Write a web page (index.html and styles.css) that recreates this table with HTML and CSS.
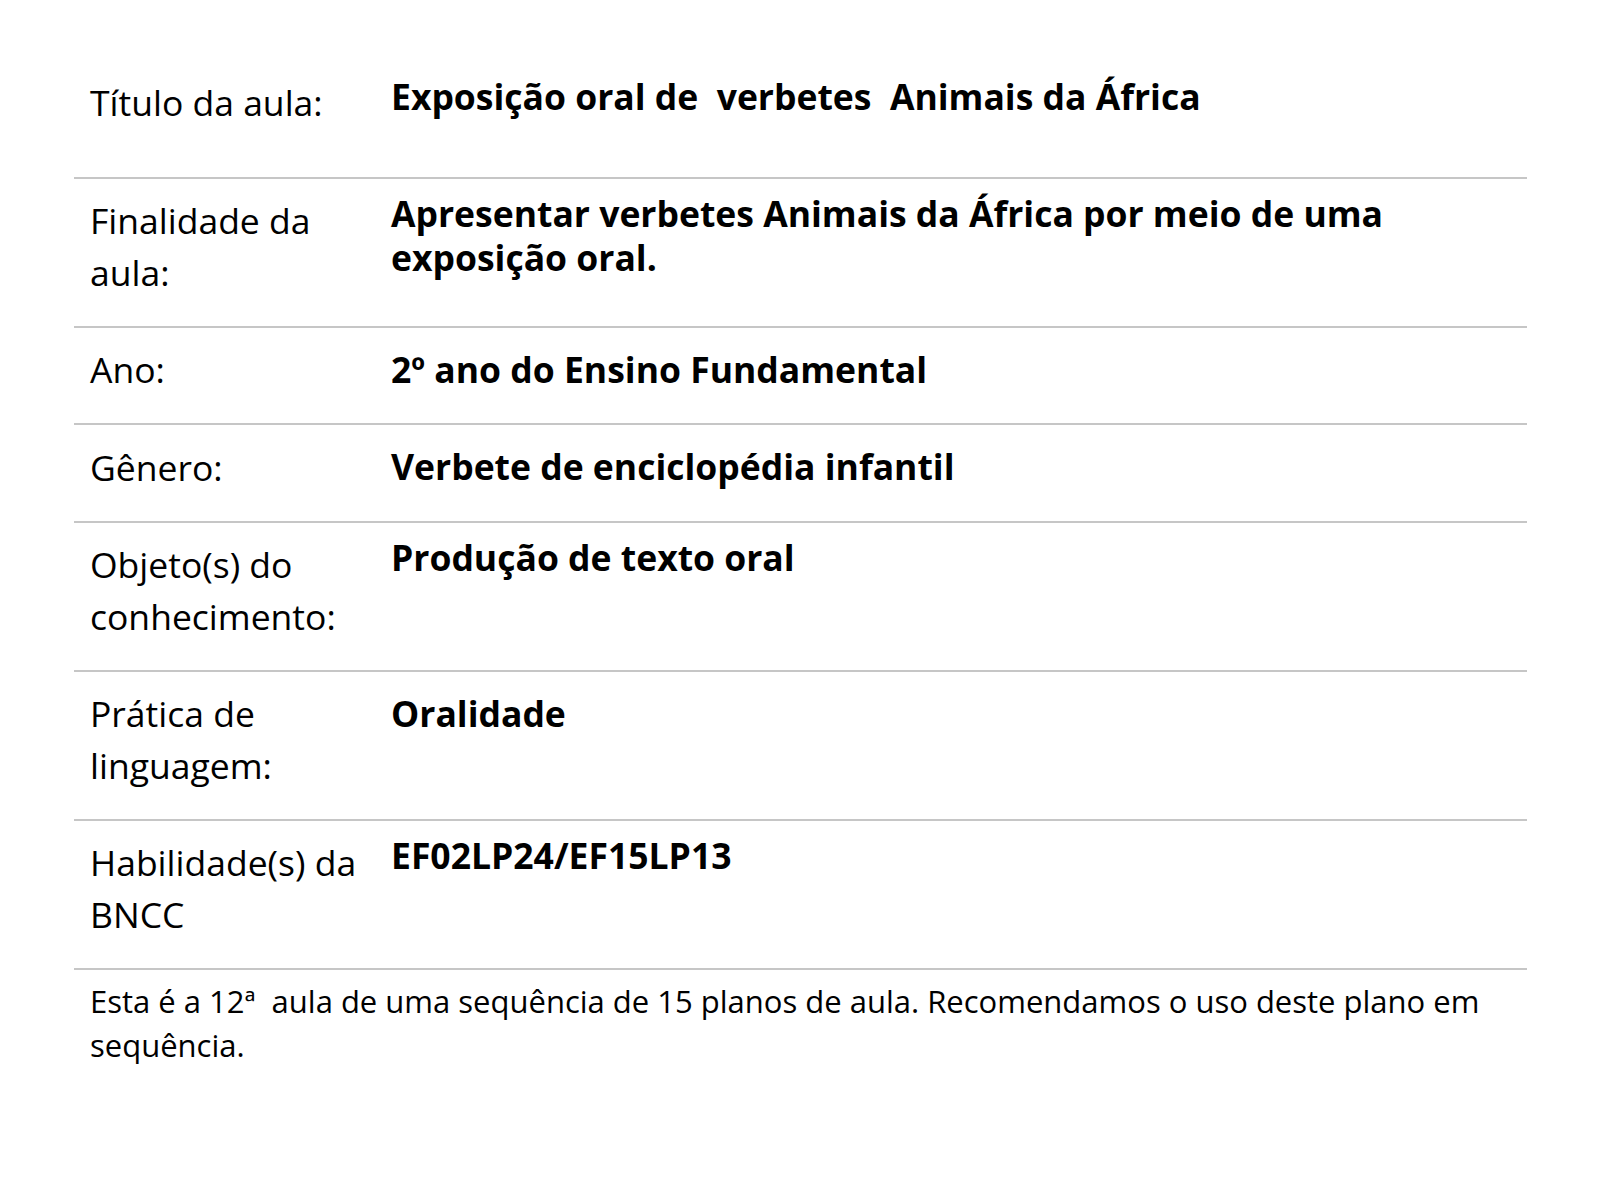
FILE: index.html
```html
<!DOCTYPE html>
<html lang="pt-BR">
<head>
<meta charset="utf-8">
<title>Plano de aula</title>
<link rel="stylesheet" href="styles.css">
</head>
<body>
<main class="page">
  <table class="plan">
    <tbody>
      <tr class="row row-first">
        <th class="label">Título da aula:</th>
        <td class="value value-up">Exposição oral de&nbsp; verbetes&nbsp; Animais da África</td>
      </tr>
      <tr class="row">
        <th class="label">Finalidade da aula:</th>
        <td class="value value-up">Apresentar verbetes Animais da África por meio de uma exposição oral.</td>
      </tr>
      <tr class="row">
        <th class="label">Ano:</th>
        <td class="value">2º ano do Ensino Fundamental</td>
      </tr>
      <tr class="row">
        <th class="label">Gênero:</th>
        <td class="value">Verbete de enciclopédia infantil</td>
      </tr>
      <tr class="row">
        <th class="label">Objeto(s) do conhecimento:</th>
        <td class="value value-up">Produção de texto oral</td>
      </tr>
      <tr class="row">
        <th class="label">Prática de linguagem:</th>
        <td class="value">Oralidade</td>
      </tr>
      <tr class="row">
        <th class="label">Habilidade(s) da BNCC</th>
        <td class="value value-up">EF02LP24/EF15LP13</td>
      </tr>
    </tbody>
  </table>
  <p class="note">Esta é a 12ª&nbsp; aula de uma sequência de 15 planos de aula. Recomendamos o uso deste plano em sequência.</p>
</main>
</body>
</html>
```

FILE: styles.css
```css
html, body {
  margin: 0;
  padding: 0;
  background: #ffffff;
}

body {
  font-family: "Open Sans", "Noto Sans", sans-serif;
  color: #000000;
}

.page {
  padding: 74px 73px 0 74px;
}

.plan {
  width: 100%;
  border-collapse: collapse;
}

.row {
  border-bottom: 2px solid #c6c6c6;
}

.label {
  width: 277px;
  padding: 16.5px 8px 27.5px 16px;
  text-align: left;
  vertical-align: top;
  font-weight: 400;
  font-size: 35.5px;
  line-height: 51.5px;
}

.value {
  padding: 19px 16px 0 16px;
  vertical-align: top;
  font-weight: 700;
  font-size: 35.5px;
  line-height: 44px;
}

.value-up {
  padding-top: 12px;
}

.row-first .label {
  padding-top: 3px;
  padding-bottom: 48px;
}

.row-first .value {
  padding-top: 0;
}

.note {
  margin: 0;
  padding: 9px 16px 0 16px;
  font-size: 31px;
  line-height: 44px;
}
```
